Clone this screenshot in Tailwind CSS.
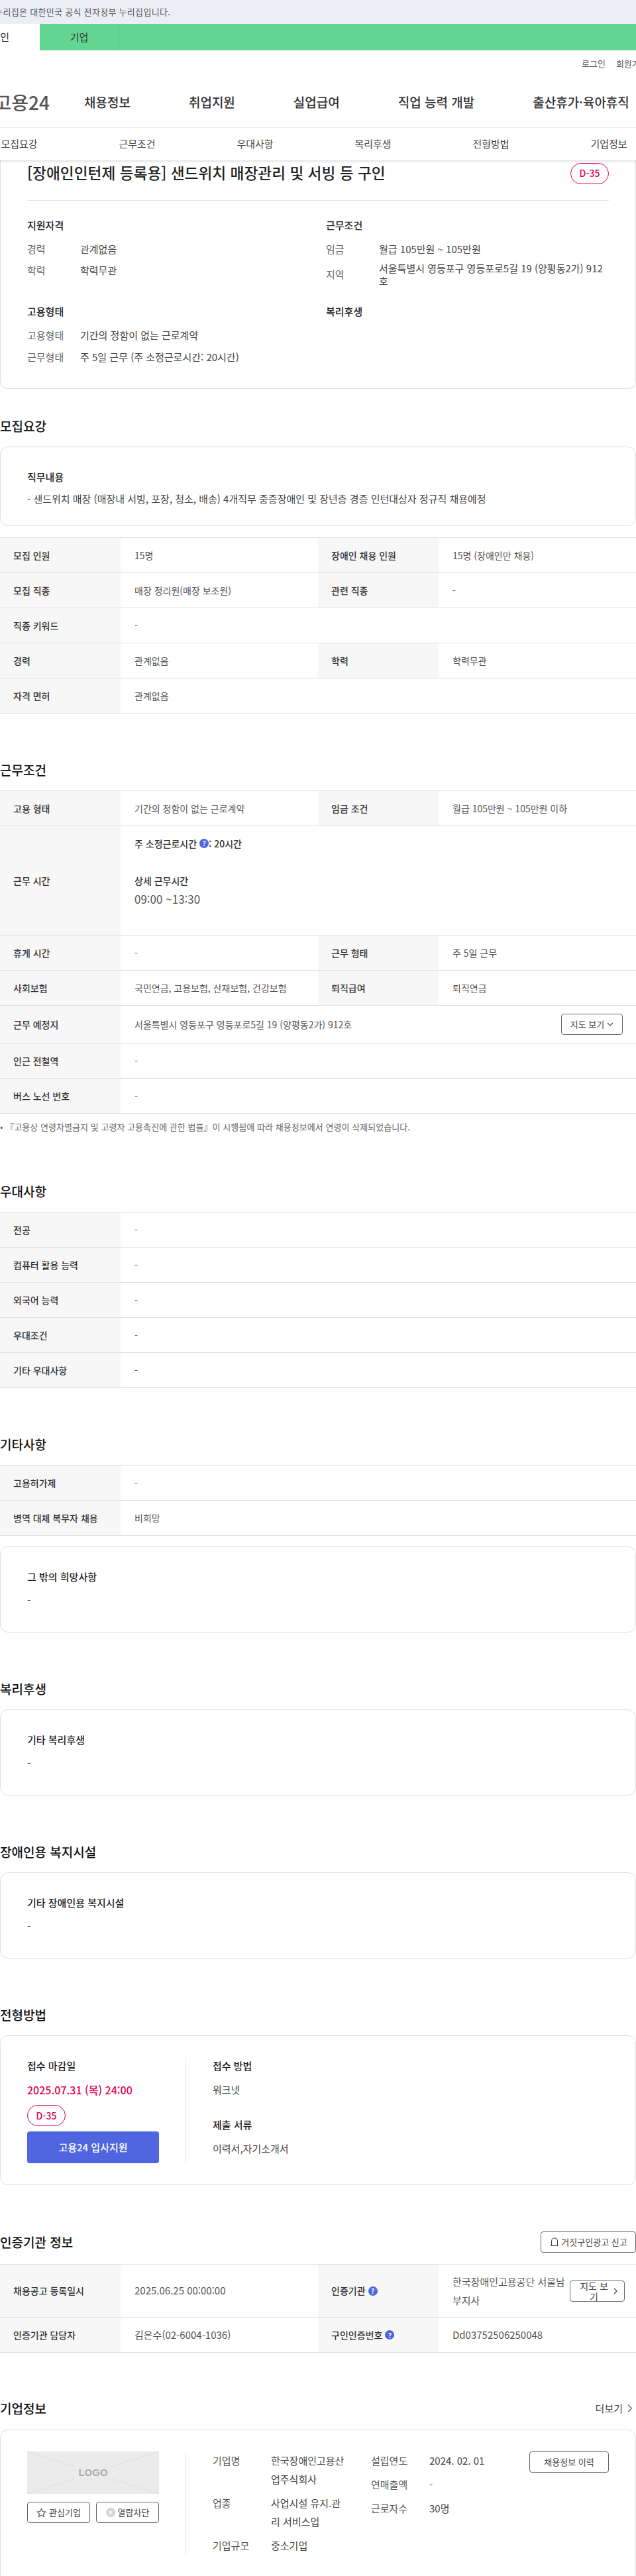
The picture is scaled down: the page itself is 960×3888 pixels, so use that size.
<!DOCTYPE html>
<html lang="ko">
<head>
<meta charset="UTF-8">
<title>고용24 채용정보 상세</title>
<script src="https://cdn.jsdelivr.net/npm/@tailwindcss/browser@4"></script>
</head>
<body class="w-[960px] overflow-x-hidden bg-white text-[15px] text-[#444] font-['Noto_Sans_CJK_KR','Noto_Sans',sans-serif]">

<!-- 정부 안내 바 -->
<div class="h-[36px] bg-[#ebeff5] flex items-center overflow-hidden">
  <span class="-ml-[24px] whitespace-nowrap text-[13px] tracking-[0.3px] text-[#555]">이 누리집은 대한민국 공식 전자정부 누리집입니다.</span>
</div>

<!-- 개인/기업 탭 -->
<div class="h-[40px] bg-[#62d592] flex overflow-hidden">
  <div class="w-[60px] shrink-0 bg-white flex items-center justify-end pr-[46px] whitespace-nowrap text-[#222] overflow-hidden"><span class="shrink-0">개인</span></div>
  <div class="w-[120px] flex items-center justify-center border-r border-[#55c585] text-[#333]">기업</div>
</div>

<!-- 로그인 -->
<div class="h-[40px] flex items-center pl-[878px] gap-4 text-[13px] text-[#555] whitespace-nowrap">
  <span>로그인</span><span>회원가입</span>
</div>

<!-- 메인 메뉴 -->
<div class="h-[77px] border-b border-[#eeeeee] flex items-center whitespace-nowrap overflow-hidden">
  <div class="w-[75px] shrink-0 flex justify-end"><span class="shrink-0 text-[28px] font-medium text-[#555]">고용24</span></div>
  <nav class="ml-[52px] flex gap-[88px] text-[19px] font-medium text-[#333]">
    <span>채용정보</span><span>취업지원</span><span>실업급여</span><span>직업 능력 개발</span><span>출산휴가·육아휴직</span>
  </nav>
</div>

<!-- 상세 탭 -->
<div class="relative z-10 h-[49px] -ml-[60px] w-[1068px] grid grid-cols-6 items-center text-center text-[#444] bg-white shadow-[0_2px_3px_rgba(0,0,0,0.12)]">
  <span>모집요강</span><span>근무조건</span><span>우대사항</span><span>복리후생</span><span>전형방법</span><span>기업정보</span>
</div>

<!-- 요약 카드 -->
<section class="h-[345px] border-x border-b border-[#e0e0e0] rounded-b-xl px-[40px]">
  <div class="h-[61px] border-b border-[#e6e6e6] pb-[21px] flex items-center justify-between">
    <h1 class="text-[22.7px] font-medium text-[#222] whitespace-nowrap">[장애인인턴제 등록용] 샌드위치 매장관리 및 서빙 등 구인</h1>
    <span class="w-[58px] h-[32px] rounded-2xl border border-[#e0004f] text-[#e0004f] text-[14px] font-medium flex items-center justify-center">D-35</span>
  </div>
  <div class="mt-[25px] grid grid-cols-[451px_1fr] gap-y-[25px]">
    <div>
      <h3 class="h-[24px] leading-[24px] font-medium text-[#222]">지원자격</h3>
      <dl class="mt-[13px] grid grid-cols-[80px_1fr] gap-y-[10px] leading-[22px]">
        <dt class="text-[#666]">경력</dt><dd>관계없음</dd>
        <dt class="text-[#666]">학력</dt><dd>학력무관</dd>
      </dl>
    </div>
    <div>
      <h3 class="h-[24px] leading-[24px] font-medium text-[#222]">근무조건</h3>
      <dl class="mt-[13px] grid grid-cols-[80px_1fr] gap-y-[8px] items-center leading-[22px]">
        <dt class="text-[#666]">임금</dt><dd>월급 105만원 ~ 105만원</dd>
        <dt class="text-[#666]">지역</dt><dd class="leading-[19px] break-all">서울특별시 영등포구 영등포로5길 19 (양평동2가) 912호</dd>
      </dl>
    </div>
    <div>
      <h3 class="h-[24px] leading-[24px] font-medium text-[#222]">고용형태</h3>
      <dl class="mt-[13px] grid grid-cols-[80px_1fr] gap-y-[11px] leading-[22px]">
        <dt class="text-[#666]">고용형태</dt><dd>기간의 정함이 없는 근로계약</dd>
        <dt class="text-[#666]">근무형태</dt><dd>주 5일 근무 (주 소정근로시간: 20시간)</dd>
      </dl>
    </div>
    <div>
      <h3 class="h-[24px] leading-[24px] font-medium text-[#222]">복리후생</h3>
    </div>
  </div>
</section>

<!-- 모집요강 -->
<h2 class="mt-[42px] h-[28px] leading-[28px] text-[19px] font-medium text-[#111]">모집요강</h2>
<div class="mt-[17px] h-[120px] border border-[#e0e0e0] rounded-xl px-[40px] pt-[33px]">
  <h3 class="leading-[24px] font-medium text-[#222]">직무내용</h3>
  <p class="mt-[9px] leading-[24px]">- 샌드위치 매장 (매장내 서빙, 포장, 청소, 배송) 4개직무 중증장애인 및 장년층 경증 인턴대상자 정규직 채용예정</p>
</div>
<div class="mt-[17px] border-t border-[#e0e0e0] text-[14px]">
  <div class="h-[53px] border-b border-[#e0e0e0] grid grid-cols-[182px_298px_182px_298px]">
    <div class="bg-[#f7f7f7] pl-5 flex items-center font-medium text-[#333]">모집 인원</div>
    <div class="pl-[21px] flex items-center text-[#555]">15명</div>
    <div class="bg-[#f7f7f7] pl-5 flex items-center font-medium text-[#333]">장애인 채용 인원</div>
    <div class="pl-[21px] flex items-center text-[#555]">15명 (장애인만 채용)</div>
  </div>
  <div class="h-[53px] border-b border-[#e0e0e0] grid grid-cols-[182px_298px_182px_298px]">
    <div class="bg-[#f7f7f7] pl-5 flex items-center font-medium text-[#333]">모집 직종</div>
    <div class="pl-[21px] flex items-center text-[#555]">매장 정리원(매장 보조원)</div>
    <div class="bg-[#f7f7f7] pl-5 flex items-center font-medium text-[#333]">관련 직종</div>
    <div class="pl-[21px] flex items-center text-[#555]">-</div>
  </div>
  <div class="h-[53px] border-b border-[#e0e0e0] grid grid-cols-[182px_1fr]">
    <div class="bg-[#f7f7f7] pl-5 flex items-center font-medium text-[#333]">직종 키워드</div>
    <div class="pl-[21px] flex items-center text-[#555]">-</div>
  </div>
  <div class="h-[53px] border-b border-[#e0e0e0] grid grid-cols-[182px_298px_182px_298px]">
    <div class="bg-[#f7f7f7] pl-5 flex items-center font-medium text-[#333]">경력</div>
    <div class="pl-[21px] flex items-center text-[#555]">관계없음</div>
    <div class="bg-[#f7f7f7] pl-5 flex items-center font-medium text-[#333]">학력</div>
    <div class="pl-[21px] flex items-center text-[#555]">학력무관</div>
  </div>
  <div class="h-[53px] border-b border-[#e0e0e0] grid grid-cols-[182px_1fr]">
    <div class="bg-[#f7f7f7] pl-5 flex items-center font-medium text-[#333]">자격 면허</div>
    <div class="pl-[21px] flex items-center text-[#555]">관계없음</div>
  </div>
</div>

<!-- 근무조건 -->
<h2 class="mt-[71px] h-[28px] leading-[28px] text-[19px] font-medium text-[#111]">근무조건</h2>
<div class="mt-[17px] border-t border-[#e0e0e0] text-[14px]">
  <div class="h-[53px] border-b border-[#e0e0e0] grid grid-cols-[182px_298px_182px_298px]">
    <div class="bg-[#f7f7f7] pl-5 flex items-center font-medium text-[#333]">고용 형태</div>
    <div class="pl-[21px] flex items-center text-[#555]">기간의 정함이 없는 근로계약</div>
    <div class="bg-[#f7f7f7] pl-5 flex items-center font-medium text-[#333]">임금 조건</div>
    <div class="pl-[21px] flex items-center text-[#555]">월급 105만원 ~ 105만원 이하</div>
  </div>
  <div class="h-[165px] border-b border-[#e0e0e0] grid grid-cols-[182px_1fr]">
    <div class="bg-[#f7f7f7] pl-5 flex items-center font-medium text-[#333]">근무 시간</div>
    <div class="pl-[21px] pt-3 leading-[28px] text-[#555]">
      <p class="font-medium text-[#333] flex items-center">주 소정근로시간
        <span class="ml-1 w-[14px] h-[14px] rounded-full bg-[#4f66e0] text-white text-[10px] font-bold flex items-center justify-center">?</span>: 20시간</p>
      <p class="h-[28px]"></p>
      <p class="font-medium text-[#333]">상세 근무시간</p>
      <p class="text-[17px]">09:00 ~13:30</p>
    </div>
  </div>
  <div class="h-[53px] border-b border-[#e0e0e0] grid grid-cols-[182px_298px_182px_298px]">
    <div class="bg-[#f7f7f7] pl-5 flex items-center font-medium text-[#333]">휴게 시간</div>
    <div class="pl-[21px] flex items-center text-[#555]">-</div>
    <div class="bg-[#f7f7f7] pl-5 flex items-center font-medium text-[#333]">근무 형태</div>
    <div class="pl-[21px] flex items-center text-[#555]">주 5일 근무</div>
  </div>
  <div class="h-[53px] border-b border-[#e0e0e0] grid grid-cols-[182px_298px_182px_298px]">
    <div class="bg-[#f7f7f7] pl-5 flex items-center font-medium text-[#333]">사회보험</div>
    <div class="pl-[21px] flex items-center text-[#555]">국민연금, 고용보험, 산재보험, 건강보험</div>
    <div class="bg-[#f7f7f7] pl-5 flex items-center font-medium text-[#333]">퇴직급여</div>
    <div class="pl-[21px] flex items-center text-[#555]">퇴직연금</div>
  </div>
  <div class="h-[57px] border-b border-[#e0e0e0] grid grid-cols-[182px_1fr]">
    <div class="bg-[#f7f7f7] pl-5 flex items-center font-medium text-[#333]">근무 예정지</div>
    <div class="pl-[21px] pr-5 flex items-center justify-between text-[#555]">
      <span>서울특별시 영등포구 영등포로5길 19 (양평동2가) 912호</span>
      <button class="w-[93px] h-[32px] border border-[#666] rounded flex items-center justify-center gap-1 text-[13px] text-[#444]">지도 보기
        <svg class="w-[10px] h-[10px]" viewBox="0 0 10 10" fill="none" stroke="#444" stroke-width="1.2"><path d="M1 3l4 4 4-4"/></svg>
      </button>
    </div>
  </div>
  <div class="h-[53px] border-b border-[#e0e0e0] grid grid-cols-[182px_1fr]">
    <div class="bg-[#f7f7f7] pl-5 flex items-center font-medium text-[#333]">인근 전철역</div>
    <div class="pl-[21px] flex items-center text-[#555]">-</div>
  </div>
  <div class="h-[53px] border-b border-[#e0e0e0] grid grid-cols-[182px_1fr]">
    <div class="bg-[#f7f7f7] pl-5 flex items-center font-medium text-[#333]">버스 노선 번호</div>
    <div class="pl-[21px] flex items-center text-[#555]">-</div>
  </div>
</div>
<p class="mt-[9px] h-[22px] leading-[22px] text-[13px] tracking-[0.05px] text-[#666] whitespace-nowrap">• 『고용상 연령차별금지 및 고령자 고용촉진에 관한 법률』이 시행됨에 따라 채용정보에서 연령이 삭제되었습니다.</p>

<!-- 우대사항 -->
<h2 class="mt-[72px] h-[28px] leading-[28px] text-[19px] font-medium text-[#111]">우대사항</h2>
<div class="mt-[17px] border-t border-[#e0e0e0] text-[14px]">
  <div class="h-[53px] border-b border-[#e0e0e0] grid grid-cols-[182px_1fr]">
    <div class="bg-[#f7f7f7] pl-5 flex items-center font-medium text-[#333]">전공</div>
    <div class="pl-[21px] flex items-center text-[#555]">-</div>
  </div>
  <div class="h-[53px] border-b border-[#e0e0e0] grid grid-cols-[182px_1fr]">
    <div class="bg-[#f7f7f7] pl-5 flex items-center font-medium text-[#333]">컴퓨터 활용 능력</div>
    <div class="pl-[21px] flex items-center text-[#555]">-</div>
  </div>
  <div class="h-[53px] border-b border-[#e0e0e0] grid grid-cols-[182px_1fr]">
    <div class="bg-[#f7f7f7] pl-5 flex items-center font-medium text-[#333]">외국어 능력</div>
    <div class="pl-[21px] flex items-center text-[#555]">-</div>
  </div>
  <div class="h-[53px] border-b border-[#e0e0e0] grid grid-cols-[182px_1fr]">
    <div class="bg-[#f7f7f7] pl-5 flex items-center font-medium text-[#333]">우대조건</div>
    <div class="pl-[21px] flex items-center text-[#555]">-</div>
  </div>
  <div class="h-[53px] border-b border-[#e0e0e0] grid grid-cols-[182px_1fr]">
    <div class="bg-[#f7f7f7] pl-5 flex items-center font-medium text-[#333]">기타 우대사항</div>
    <div class="pl-[21px] flex items-center text-[#555]">-</div>
  </div>
</div>

<!-- 기타사항 -->
<h2 class="mt-[71px] h-[28px] leading-[28px] text-[19px] font-medium text-[#111]">기타사항</h2>
<div class="mt-[17px] border-t border-[#e0e0e0] text-[14px]">
  <div class="h-[53px] border-b border-[#e0e0e0] grid grid-cols-[182px_1fr]">
    <div class="bg-[#f7f7f7] pl-5 flex items-center font-medium text-[#333]">고용허가제</div>
    <div class="pl-[21px] flex items-center text-[#555]">-</div>
  </div>
  <div class="h-[53px] border-b border-[#e0e0e0] grid grid-cols-[182px_1fr]">
    <div class="bg-[#f7f7f7] pl-5 flex items-center font-medium text-[#333]">병역 대체 복무자 채용</div>
    <div class="pl-[21px] flex items-center text-[#555]">비희망</div>
  </div>
</div>
<div class="mt-[16px] h-[130px] border border-[#e0e0e0] rounded-xl px-[40px] pt-[33px]">
  <h3 class="leading-[24px] font-medium text-[#222]">그 밖의 희망사항</h3>
  <p class="mt-[11px] leading-[24px]">-</p>
</div>

<!-- 복리후생 -->
<h2 class="mt-[71px] h-[28px] leading-[28px] text-[19px] font-medium text-[#111]">복리후생</h2>
<div class="mt-[17px] h-[130px] border border-[#e0e0e0] rounded-xl px-[40px] pt-[33px]">
  <h3 class="leading-[24px] font-medium text-[#222]">기타 복리후생</h3>
  <p class="mt-[11px] leading-[24px]">-</p>
</div>

<!-- 장애인용 복지시설 -->
<h2 class="mt-[71px] h-[28px] leading-[28px] text-[19px] font-medium text-[#111]">장애인용 복지시설</h2>
<div class="mt-[17px] h-[130px] border border-[#e0e0e0] rounded-xl px-[40px] pt-[33px]">
  <h3 class="leading-[24px] font-medium text-[#222]">기타 장애인용 복지시설</h3>
  <p class="mt-[11px] leading-[24px]">-</p>
</div>

<!-- 전형방법 -->
<h2 class="mt-[71px] h-[28px] leading-[28px] text-[19px] font-medium text-[#111]">전형방법</h2>
<div class="mt-[17px] h-[226px] border border-[#e0e0e0] rounded-xl px-[40px] pt-[32px] flex">
  <div class="w-[199px] shrink-0 h-[160px]">
    <h3 class="leading-[26px] font-medium text-[#222]">접수 마감일</h3>
    <p class="mt-[10px] leading-[26px] text-[16px] font-medium text-[#e0004f] whitespace-nowrap">2025.07.31 (목) 24:00</p>
    <span class="mt-[10px] w-[58px] h-[32px] rounded-2xl border border-[#e0004f] text-[#e0004f] text-[14px] font-medium flex items-center justify-center">D-35</span>
    <button class="mt-[8px] w-full h-[48px] rounded bg-[#4f66e0] text-white font-medium">고용24 입사지원</button>
  </div>
  <div class="ml-[40px] pl-[40px] h-[160px] border-l border-[#e6e6e6]">
    <h3 class="leading-[26px] font-medium text-[#222]">접수 방법</h3>
    <p class="mt-[10px] leading-[26px]">워크넷</p>
    <h3 class="mt-[27px] leading-[26px] font-medium text-[#222]">제출 서류</h3>
    <p class="mt-[10px] leading-[26px]">이력서,자기소개서</p>
  </div>
</div>

<!-- 인증기관 정보 -->
<div class="mt-[72px] h-[28px] flex items-center justify-between">
  <h2 class="leading-[28px] text-[19px] font-medium text-[#111]">인증기관 정보</h2>
  <button class="w-[144px] h-[32px] shrink-0 border border-[#666] rounded flex items-center justify-center gap-[2px] text-[13px] text-[#444] whitespace-nowrap">
    <svg class="w-[16px] h-[16px]" viewBox="0 0 16 16" fill="none" stroke="#444" stroke-width="1.1"><path d="M3.5 13.5V6.5a4.5 4.5 0 0 1 9 0v7zM2 13.5h12"/></svg>거짓구인광고 신고
  </button>
</div>
<div class="mt-[19px] border-t border-[#e0e0e0] text-[14px]">
  <div class="h-[80px] border-b border-[#e0e0e0] grid grid-cols-[182px_298px_182px_298px]">
    <div class="bg-[#f7f7f7] pl-5 flex items-center font-medium text-[#333]">채용공고 등록일시</div>
    <div class="pl-[21px] flex items-center text-[15px] text-[#555]">2025.06.25 00:00:00</div>
    <div class="bg-[#f7f7f7] pl-5 flex items-center gap-1 font-medium text-[#333]">인증기관
      <span class="w-[14px] h-[14px] rounded-full bg-[#4f66e0] text-white text-[10px] font-bold flex items-center justify-center">?</span>
    </div>
    <div class="pl-[21px] pr-5 flex items-center gap-[5px] text-[#555]">
      <span class="w-[172px] shrink-0 text-[15px] leading-[28px]">한국장애인고용공단 서울남부지사</span>
      <button class="w-[83px] h-[32px] shrink-0 border border-[#666] rounded flex items-center justify-center text-[14px] leading-[16px] text-[#444]">
        <span class="w-[55px] text-center">지도 보기</span>
        <svg class="w-[10px] h-[12px]" viewBox="0 0 10 12" fill="none" stroke="#444" stroke-width="1.2"><path d="M3 2l4 4-4 4"/></svg>
      </button>
    </div>
  </div>
  <div class="h-[53px] border-b border-[#e0e0e0] grid grid-cols-[182px_298px_182px_298px]">
    <div class="bg-[#f7f7f7] pl-5 flex items-center font-medium text-[#333]">인증기관 담당자</div>
    <div class="pl-[21px] flex items-center text-[15px] text-[#555]">김은수(02-6004-1036)</div>
    <div class="bg-[#f7f7f7] pl-5 flex items-center gap-1 font-medium text-[#333]">구인인증번호
      <span class="w-[14px] h-[14px] rounded-full bg-[#4f66e0] text-white text-[10px] font-bold flex items-center justify-center">?</span>
    </div>
    <div class="pl-[21px] flex items-center text-[15px] text-[#555]">Dd03752506250048</div>
  </div>
</div>

<!-- 기업정보 -->
<div class="mt-[70px] h-[28px] flex items-center justify-between">
  <h2 class="leading-[28px] text-[19px] font-medium text-[#111]">기업정보</h2>
  <a class="pr-[5px] flex items-center gap-[7px] text-[15px] text-[#444]">더보기
    <svg class="w-[8px] h-[14px]" viewBox="0 0 8 14" fill="none" stroke="#555" stroke-width="1.1"><path d="M1 1.5l5.5 5.5L1 12.5"/></svg>
  </a>
</div>
<div class="mt-[18px] h-[240px] border border-[#e0e0e0] rounded-xl px-[40px] pt-[32px] flex">
  <div class="w-[199px] shrink-0">
    <div class="relative h-[64px] bg-[#ebebeb] flex items-center justify-center">
      <svg class="absolute inset-0 w-full h-full" viewBox="0 0 199 64" fill="none" stroke="#dedede"><path d="M0 0L72 23M199 0L127 23M0 64L72 41M199 64L127 41"/></svg>
      <span class="relative text-[15px] font-bold text-[#aaa] font-['Liberation_Sans',sans-serif]">LOGO</span>
    </div>
    <div class="mt-[12px] grid grid-cols-[95px_95px] gap-[9px]">
      <button class="h-[32px] border border-[#666] rounded flex items-center justify-center gap-1 text-[13px] text-[#444]">
        <svg class="w-[15px] h-[15px]" viewBox="0 0 16 16" fill="none" stroke="#444" stroke-width="1.1"><path d="M8 1.5l2 4.4 4.7.6-3.5 3.2 1 4.7L8 11.9l-4.2 2.5 1-4.7L1.3 6.5 6 5.9z"/></svg>관심기업
      </button>
      <button class="h-[32px] border border-[#666] rounded flex items-center justify-center gap-1 text-[13px] text-[#444]">
        <svg class="w-[14px] h-[14px]" viewBox="0 0 14 14"><circle cx="7" cy="7" r="7" fill="#d4d4d4"/><path d="M4.5 4.5l5 5M9.5 4.5l-5 5" stroke="#fff" stroke-width="1.3"/></svg>열람차단
      </button>
    </div>
  </div>
  <div class="ml-[40px] pl-[40px] h-[156px] border-l border-[#e6e6e6] flex leading-[28px]">
    <dl class="w-[239px] shrink-0 grid grid-cols-[88px_114px] gap-y-[8px] content-start">
      <dt class="text-[#555]">기업명</dt><dd class="break-all">한국장애인고용산업주식회사</dd>
      <dt class="text-[#555]">업종</dt><dd class="break-all">사업시설 유지.관리 서비스업</dd>
      <dt class="text-[#555]">기업규모</dt><dd>중소기업</dd>
    </dl>
    <dl class="w-[239px] shrink-0 grid grid-cols-[88px_1fr] gap-y-[8px] content-start">
      <dt class="text-[#555]">설립연도</dt><dd>2024. 02. 01</dd>
      <dt class="text-[#555]">연매출액</dt><dd>-</dd>
      <dt class="text-[#555]">근로자수</dt><dd>30명</dd>
    </dl>
    <button class="w-[120px] h-[32px] shrink-0 border border-[#666] rounded text-[13px] leading-[20px] text-[#444]">채용정보 이력</button>
  </div>
</div>

</body>
</html>
